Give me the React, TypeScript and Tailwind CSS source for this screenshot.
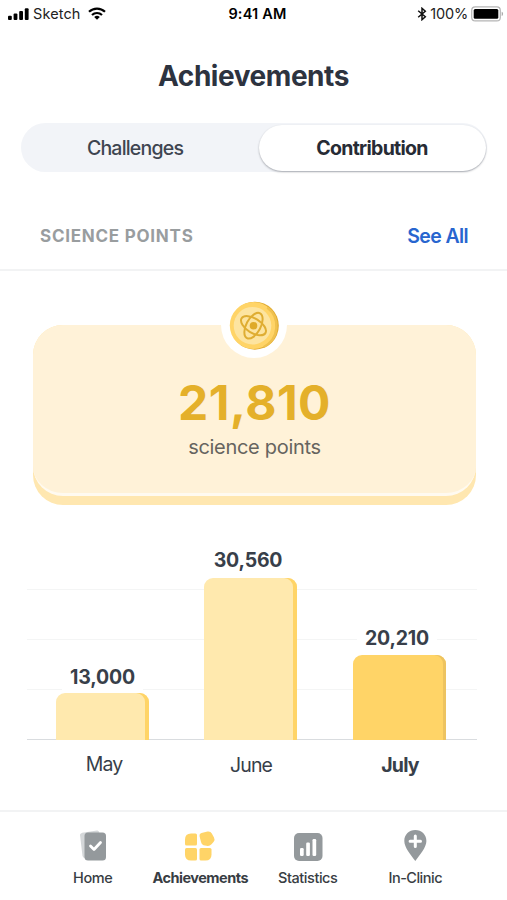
import React from "react";

type Bar = {
  month: string;
  value: string;
  column: string;
  bar: string;
  label: string;
  caption: string;
};

const bars: Bar[] = [
  {
    month: "May",
    value: "13,000",
    column: "ml-[29px]",
    bar: "h-[47px] bg-[#ffe9ae] shadow-[inset_-4px_0_0_#ffd467]",
    label: "mb-[3px]",
    caption: "pl-[3px] pb-[2px] tracking-[-0.9px]",
  },
  {
    month: "June",
    value: "30,560",
    column: "ml-[55px]",
    bar: "h-[162px] bg-[#ffe9ae] shadow-[inset_-4px_0_0_#ffd467]",
    label: "mb-[5px] mr-[5px]",
    caption: "pl-[1px] tracking-[-0.9px]",
  },
  {
    month: "July",
    value: "20,210",
    column: "ml-[56px]",
    bar: "h-[85px] bg-[#ffd467] shadow-[inset_-3px_0_0_#edc360]",
    label: "mb-[4px] mr-[5px]",
    caption: "pl-[1px] font-bold tracking-[-0.8px]",
  },
];

function StatusBar() {
  return (
    <div className="flex h-7 items-center justify-between pl-2 pr-[2px] text-black">
      <div className="flex w-[140px] items-center">
        <svg width="21" height="13" viewBox="0 0 21 13">
          <rect x="0" y="7.700" width="3.800" height="4.200" rx="1" />
          <rect x="5.600" y="5.500" width="3.800" height="6.400" rx="1" />
          <rect x="11.200" y="3" width="3.800" height="8.900" rx="1" />
          <rect x="16.800" y="0.300" width="3.800" height="11.600" rx="1" />
        </svg>
        <span className="ml-1 text-[14.5px] tracking-[0.1px] text-[#222]">Sketch</span>
        <svg className="mb-px ml-[8px]" width="18" height="13" viewBox="0 0 18 13" fill="none" stroke="#000" strokeWidth="2.2">
          <path d="M1 4.800a11.500 11.500 0 0 1 16 0" />
          <path d="M4 8a7.200 7.200 0 0 1 10 0" />
          <path d="M6.200 10.100a4 4 0 0 1 5.600 0L9 12.800z" fill="#000" stroke="none" />
        </svg>
      </div>
      <span className="text-[14.5px] font-semibold tracking-[0.2px]">9:41 AM</span>
      <div className="flex w-[138px] items-center justify-end">
        <svg width="10" height="14" viewBox="0 0 10 14" fill="none" stroke="#111" strokeWidth="1.500">
          <path d="M1.200 3.800 8.300 9.800 5 12.700V1.300l3.300 2.900-7.100 6" />
        </svg>
        <span className="ml-[3px] text-[14.5px] tracking-[-0.2px] text-[#222]">100%</span>
        <svg className="ml-[3px] mr-px" width="33" height="16" viewBox="0 0 33 16">
          <rect x="0.700" y="0.900" width="28.600" height="14" rx="3.500" fill="#fff" stroke="#b5b5b5" strokeWidth="1.200" />
          <rect x="2.700" y="3" width="24.600" height="9.800" rx="1.500" />
          <path d="M30.700 5.800c1.800.5 1.800 3.700 0 4.200z" fill="#aaa" />
        </svg>
      </div>
    </div>
  );
}

function Coin() {
  return (
    <svg width="68" height="68" viewBox="0 0 68 68">
      <circle cx="34" cy="33" r="33" fill="#fff" />
      <circle cx="34.8" cy="33.7" r="24" fill="#e0aa30" />
      <circle cx="33.3" cy="33.5" r="23.5" fill="#ffd467" />
      <path d="M47.300 15.500A23.500 23.500 0 0 1 43.800 55" fill="none" stroke="#efc14f" strokeWidth="2.500" />
      <circle cx="32.500" cy="33.700" r="18.800" fill="#fde4a0" />
      <g fill="none" stroke="#dfad32" strokeWidth="2">
        <ellipse cx="33.500" cy="33.700" rx="14" ry="7.200" transform="rotate(32 33.500 33.700)" />
        <ellipse cx="33.500" cy="33.700" rx="14" ry="7.200" transform="rotate(-62 33.500 33.700)" />
      </g>
      <circle cx="33.500" cy="33.700" r="3.800" fill="#dfaa29" />
    </svg>
  );
}

function PointsCard() {
  return (
    <div className="relative ml-[33px] mt-[54px] h-[180px] w-[443px] rounded-[30px] bg-[#ffe7b0]">
      <div className="flex h-[171px] flex-col items-center rounded-[30px] border-b-[3px] border-[#fffaf0] bg-[#fff2d8] pt-[49px]">
        <span className="text-[48px] font-bold leading-[58px] tracking-[0.5px] text-[#e4b02a]">21,810</span>
        <span className="text-[20px] leading-[31px] tracking-[-0.3px] text-[#66645f]">science points</span>
      </div>
      <div className="absolute left-[187px] top-[-33px]">
        <Coin />
      </div>
    </div>
  );
}

function Chart() {
  return (
    <div className="ml-[27px] mt-[34px] w-[450px] text-[#383f4a]">
      <div className="relative h-[201px] border-b border-[#d9dcdf]">
        <div className="absolute inset-x-0 bottom-0 flex h-[150px] flex-col">
          <div className="h-[50px] border-t border-[#f4f5f5]" />
          <div className="h-[50px] border-t border-[#f4f5f5]" />
          <div className="h-[50px] border-t border-[#f4f5f5]" />
        </div>
        <div className="relative flex h-[201px] items-end">
          {bars.map((item) => (
            <div key={item.month} className={`flex w-[93px] shrink-0 flex-col items-center ${item.column}`}>
              <span className={`bg-white px-2 text-[19.5px] font-bold leading-[25px] tracking-[-0.2px] ${item.label}`}>{item.value}</span>
              <div className={`w-full rounded-t-[9px] ${item.bar}`} />
            </div>
          ))}
        </div>
      </div>
      <div className="flex h-[51px] items-center">
        {bars.map((item) => (
          <span key={item.month} className={`w-[93px] shrink-0 text-center text-[19.5px] ${item.column} ${item.caption}`}>
            {item.month}
          </span>
        ))}
      </div>
    </div>
  );
}

function HomeIcon() {
  return (
    <svg className="ml-[3px]" width="34" height="34" viewBox="0 0 34 34">
      <path d="M7 3.500 20 1.500Q22 1.200 22.500 4L20 28 8 29Q6 29 5.500 27L3 6Q3 4 7 3.500z" fill="#d4d7d9" />
      <rect x="7.500" y="3.500" width="21.500" height="28" rx="3.500" fill="#94999c" />
      <path d="m13.500 17 3.500 3.500 6.500-7" fill="none" stroke="#fff" strokeWidth="2.800" strokeLinecap="round" strokeLinejoin="round" />
    </svg>
  );
}

function AchievementsIcon() {
  return (
    <svg width="34" height="34" viewBox="0 0 34 34" fill="#ffd467">
      <path d="M8 4.500h4.500Q14 4.500 14 6V15Q14 16.500 12.500 16.500H3.500Q2 16.500 2 15v-4.500Q2 4.500 8 4.500z" />
      <path d="M3.500 19H12.500Q14 19 14 20.500V30Q14 31.500 12.500 31.500H8Q2 31.500 2 25.500V20.500Q2 19 3.500 19z" />
      <path d="M18 19H27Q28.500 19 28.500 20.500v5q0 6-6 6H18Q16.500 31.500 16.500 30V20.500Q16.500 19 18 19z" />
      <path d="M18.500 4 24.500 2.500Q27.500 2 28.800 4.500L31 8.500Q32.300 11 30.700 12.800L28.500 15.200Q26.500 17.500 23.500 16.800L20.500 16.200Q18.500 15.500 18 13L16.500 7Q16.200 4.500 18.500 4z" />
    </svg>
  );
}

function StatisticsIcon() {
  return (
    <svg width="34" height="34" viewBox="0 0 34 34">
      <rect x="3" y="4" width="28.500" height="28" rx="5" fill="#94999c" />
      <g fill="#fff">
        <rect x="9" y="19" width="3.700" height="8" rx="1.200" />
        <rect x="15.200" y="13.500" width="3.700" height="13.500" rx="1.200" />
        <rect x="21.500" y="10" width="3.700" height="17" rx="1.200" />
      </g>
    </svg>
  );
}

function ClinicIcon() {
  return (
    <svg width="34" height="34" viewBox="0 0 34 34">
      <path d="M17.300 1C11 1 6.300 5.500 6.300 11.900 6.300 18.500 13 26 17.300 32 21.600 26 28.400 18.500 28.400 11.900 28.400 5.500 23.600 1 17.300 1z" fill="#94999c" />
      <path d="M17.300 7v10.400M12.100 12.200h10.400" stroke="#fff" strokeWidth="3" strokeLinecap="round" />
    </svg>
  );
}

const tabs = [
  { name: "Home", icon: <HomeIcon />, style: "font-medium tracking-[-0.35px]" },
  { name: "Achievements", icon: <AchievementsIcon />, style: "font-bold tracking-[-0.5px]" },
  { name: "Statistics", icon: <StatisticsIcon />, style: "font-medium tracking-[-0.45px]" },
  { name: "In-Clinic", icon: <ClinicIcon />, style: "font-medium tracking-[-0.5px]" },
];

export default function App() {
  return (
    <main className="flex h-[900px] w-[507px] flex-col overflow-hidden bg-white font-['Inter',sans-serif]">
      <StatusBar />
      <h1 className="mt-[30px] text-center text-[28px] font-bold leading-9 tracking-[-0.45px] text-[#2d333f]">Achievements</h1>
      <div className="mx-auto mt-[29px] flex h-[49px] w-[466px] shrink-0 items-center rounded-full bg-[#f2f4f8] pr-px text-[19.5px]">
        <span className="flex-1 pr-[9px] pt-[2px] text-center font-medium tracking-[-0.8px] text-[#3e4550]">Challenges</span>
        <span className="flex h-[46px] w-[227px] items-center justify-center rounded-full bg-white pt-[2px] font-bold tracking-[-0.7px] text-[#272b35] shadow-[0_1px_2px_rgba(50,55,65,0.4)]">
          Contribution
        </span>
      </div>
      <div className="mt-[30px] flex h-[69px] shrink-0 items-center justify-between border-b-2 border-[#f2f3f4] pl-10 pr-[39px] pt-[3px]">
        <h2 className="text-[17px] font-bold tracking-[0.75px] text-[#999d9f]">SCIENCE POINTS</h2>
        <span className="text-[19.5px] font-semibold tracking-[-0.6px] text-[#2865cf]">See All</span>
      </div>
      <PointsCard />
      <Chart />
      <nav className="mt-auto grid h-[90px] shrink-0 grid-cols-4 border-t-2 border-[#f2f3f4] pl-[39px] pr-[38px] pt-[17px]">
        {tabs.map((tab) => (
          <div key={tab.name} className="flex flex-col items-center">
            {tab.icon}
            <span className={`mt-[5px] whitespace-nowrap text-[14.5px] leading-5 text-[#383d43] ${tab.style}`}>{tab.name}</span>
          </div>
        ))}
      </nav>
    </main>
  );
}
